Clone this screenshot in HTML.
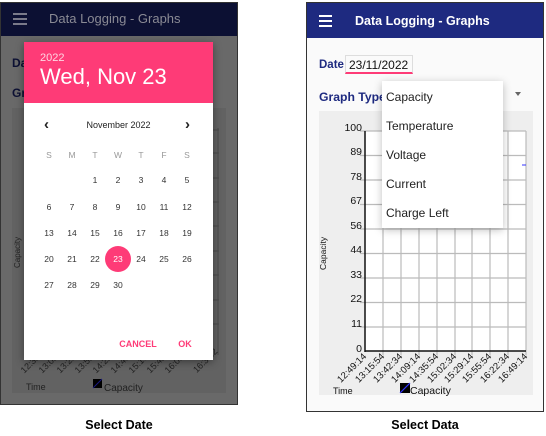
<!DOCTYPE html><html><head><style>
body{margin:0;width:546px;height:436px;background:#fff;position:relative;font-family:"Liberation Sans",sans-serif;overflow:hidden}
.a{position:absolute}
</style></head><body>
<!-- LEFT PHONE -->
<div class="a" style="left:0;top:2px;width:238px;height:403px;background:#696969;border:1px solid #333;box-sizing:border-box"></div>
<div class="a" style="left:1px;top:3px;width:236px;height:33px;background:#0c1033"></div>
<div class="a" style="left:13px;top:13px;width:14px;height:2px;background:#7a7a8a;box-shadow:0 5px 0 #7a7a8a,0 10px 0 #7a7a8a"></div>
<div class="a" style="left:49px;top:11px;font-size:13px;color:#8a8a94">Data Logging - Graphs</div>
<div class="a" style="left:12px;top:56px;font-size:12px;font-weight:bold;color:#0c1033">Da</div>
<div class="a" style="left:12px;top:86px;font-size:12px;font-weight:bold;color:#0c1033">Gr</div>
<div class="a" style="left:12px;top:108px;width:214px;height:285px;background:#626262"></div>
<svg class="a" style="left:0;top:0" width="240" height="410">
<g stroke="#4a4a4a" stroke-width="1">
<line x1="213" y1="130" x2="219" y2="130"/><line x1="213" y1="153" x2="219" y2="153"/><line x1="213" y1="178" x2="219" y2="178"/><line x1="213" y1="202" x2="219" y2="202"/><line x1="213" y1="226" x2="219" y2="226"/><line x1="213" y1="251" x2="219" y2="251"/><line x1="213" y1="275" x2="219" y2="275"/><line x1="213" y1="300" x2="219" y2="300"/><line x1="213" y1="324" x2="219" y2="324"/>
<line x1="218" y1="128" x2="218" y2="355"/></g>
<g font-size="9" fill="#222" font-family="Liberation Sans">
<text x="42" y="356" text-anchor="end" transform="rotate(-45 42 356)">12:35:</text>
<text x="60" y="356" text-anchor="end" transform="rotate(-45 60 356)">13:02:</text>
<text x="78" y="356" text-anchor="end" transform="rotate(-45 78 356)">13:29:</text>
<text x="96" y="356" text-anchor="end" transform="rotate(-45 96 356)">13:55:</text>
<text x="114" y="356" text-anchor="end" transform="rotate(-45 114 356)">14:22:</text>
<text x="132" y="356" text-anchor="end" transform="rotate(-45 132 356)">14:49:</text>
<text x="150" y="356" text-anchor="end" transform="rotate(-45 150 356)">15:16:</text>
<text x="168" y="356" text-anchor="end" transform="rotate(-45 168 356)">15:42:</text>
<text x="186" y="356" text-anchor="end" transform="rotate(-45 186 356)">16:09:</text>
<text x="218" y="352" text-anchor="end" transform="rotate(-45 218 352)">16:36:2</text>
<text x="26" y="390">Time</text>
<text x="104" y="391" font-size="10">Capacity</text>
<text x="20" y="268" transform="rotate(-90 20 268)" font-size="8">Capacity</text>
</g>
<rect x="93" y="379" width="9" height="9" fill="#000"/><line x1="93" y1="388" x2="102" y2="379" stroke="#1a1a80"/>
</svg>
<div class="a" style="left:24px;top:42px;width:189px;height:318px;background:#fff;box-shadow:0 2px 8px rgba(0,0,0,.4)"></div>
<div class="a" style="left:24px;top:42px;width:189px;height:61px;background:#fe3b77"></div>
<div class="a" style="left:40px;top:52px;font-size:11px;color:#ffd6e2">2022</div>
<div class="a" style="left:40px;top:64px;font-size:22px;color:#fff">Wed, Nov 23</div>
<div class="a" style="left:44px;top:116px;font-size:15px;color:#222;font-weight:bold">‹</div>
<div class="a" style="left:185px;top:116px;font-size:15px;color:#222;font-weight:bold">›</div>
<div class="a" style="left:24px;top:120px;width:189px;text-align:center;font-size:9px;color:#222">November 2022</div>
<svg class="a" style="left:0;top:0" width="240" height="360">
<circle cx="118" cy="259" r="13" fill="#fe3b77"/>
<g font-size="8.5" fill="#333" text-anchor="middle" font-family="Liberation Sans">
<g fill="#999"><text x="49" y="158">S</text><text x="72" y="158">M</text><text x="95" y="158">T</text><text x="118" y="158">W</text><text x="141" y="158">T</text><text x="164" y="158">F</text><text x="187" y="158">S</text></g>
<text x="95" y="183">1</text><text x="118" y="183">2</text><text x="141" y="183">3</text><text x="164" y="183">4</text><text x="187" y="183">5</text>
<text x="49" y="210">6</text><text x="72" y="210">7</text><text x="95" y="210">8</text><text x="118" y="210">9</text><text x="141" y="210">10</text><text x="164" y="210">11</text><text x="187" y="210">12</text>
<text x="49" y="236">13</text><text x="72" y="236">14</text><text x="95" y="236">15</text><text x="118" y="236">16</text><text x="141" y="236">17</text><text x="164" y="236">18</text><text x="187" y="236">19</text>
<text x="49" y="262">20</text><text x="72" y="262">21</text><text x="95" y="262">22</text><text x="118" y="262" fill="#fff">23</text><text x="141" y="262">24</text><text x="164" y="262">25</text><text x="187" y="262">26</text>
<text x="49" y="288">27</text><text x="72" y="288">28</text><text x="95" y="288">29</text><text x="118" y="288">30</text>
<g fill="#fe3b77" font-size="9" font-weight="bold"><text x="138" y="347">CANCEL</text><text x="185" y="347">OK</text></g>
</g></svg>
<div class="a" style="left:0;top:418px;width:238px;text-align:center;font-size:12.5px;font-weight:bold">Select Date</div>

<!-- RIGHT PHONE -->
<div class="a" style="left:306px;top:2px;width:238px;height:410px;background:#fafafa;border:1px solid #333;box-sizing:border-box"></div>
<div class="a" style="left:307px;top:3px;width:236px;height:35px;background:#1e2a80"></div>
<div class="a" style="left:319px;top:15px;width:13px;height:2px;background:#fff;box-shadow:0 5px 0 #fff,0 10px 0 #fff"></div>
<div class="a" style="left:355px;top:14px;font-size:12.5px;color:#fff;font-weight:bold">Data Logging - Graphs</div>
<div class="a" style="left:319px;top:59px;font-size:11.5px;font-weight:bold;color:#1e2a80">Date</div>
<div class="a" style="left:345px;top:55px;width:68px;height:19px;border:1px solid #ddd;border-bottom:2px solid #fe3b77;box-sizing:border-box;font-size:12px;color:#111;padding:2px 0 0 3px">23/11/2022</div>
<div class="a" style="left:319px;top:90px;font-size:12.2px;font-weight:bold;color:#1e2a80">Graph Type:</div>
<div class="a" style="left:515px;top:92px;width:0;height:0;border-left:3px solid transparent;border-right:3px solid transparent;border-top:4px solid #666"></div>
<div class="a" style="left:319px;top:111px;width:214px;height:284px;background:#eee"></div>
<svg class="a" style="left:0;top:0" width="546" height="410">
<rect x="365" y="131" width="161" height="220" fill="#fff"/>
<g stroke="#bbb" stroke-width="1.2">
<line x1="360" y1="131" x2="526" y2="131"/><line x1="360" y1="155.5" x2="526" y2="155.5"/><line x1="360" y1="180" x2="526" y2="180"/><line x1="360" y1="204.5" x2="526" y2="204.5"/><line x1="360" y1="229" x2="526" y2="229"/><line x1="360" y1="253.5" x2="526" y2="253.5"/><line x1="360" y1="278" x2="526" y2="278"/><line x1="360" y1="302.5" x2="526" y2="302.5"/><line x1="360" y1="327" x2="526" y2="327"/>
<line x1="383" y1="131" x2="383" y2="355"/><line x1="401" y1="131" x2="401" y2="355"/><line x1="419" y1="131" x2="419" y2="355"/><line x1="437" y1="131" x2="437" y2="355"/><line x1="455" y1="131" x2="455" y2="355"/><line x1="472" y1="131" x2="472" y2="355"/><line x1="490" y1="131" x2="490" y2="355"/><line x1="508" y1="131" x2="508" y2="355"/><line x1="526" y1="131" x2="526" y2="355"/>
</g>
<g stroke="#111" stroke-width="1.5"><line x1="365" y1="131" x2="365" y2="352"/><line x1="365" y1="351" x2="526" y2="351"/></g>
<line x1="522" y1="165" x2="526" y2="165" stroke="#33f" stroke-width="1"/>
<g font-size="10.5" fill="#111" text-anchor="end" font-family="Liberation Sans">
<text x="362" y="131">100</text><text x="362" y="155">89</text><text x="362" y="180">78</text><text x="362" y="204">67</text><text x="362" y="229">56</text><text x="362" y="253">44</text><text x="362" y="278">33</text><text x="362" y="302">22</text><text x="362" y="327">11</text><text x="362" y="352">0</text>
</g>
<g font-size="9.5" fill="#111" text-anchor="end" font-family="Liberation Sans">
<text x="367" y="357" transform="rotate(-45 367 357)">12:49:14</text>
<text x="385" y="357" transform="rotate(-45 385 357)">13:15:54</text>
<text x="403" y="357" transform="rotate(-45 403 357)">13:42:34</text>
<text x="421" y="357" transform="rotate(-45 421 357)">14:09:14</text>
<text x="439" y="357" transform="rotate(-45 439 357)">14:35:54</text>
<text x="457" y="357" transform="rotate(-45 457 357)">15:02:34</text>
<text x="474" y="357" transform="rotate(-45 474 357)">15:29:14</text>
<text x="492" y="357" transform="rotate(-45 492 357)">15:55:54</text>
<text x="510" y="357" transform="rotate(-45 510 357)">16:22:34</text>
<text x="528" y="357" transform="rotate(-45 528 357)">16:49:14</text>
</g>
<g font-size="9" fill="#111" font-family="Liberation Sans">
<text x="333" y="394">Time</text><text x="410" y="394" font-size="10.5">Capacity</text>
<text x="326" y="270" transform="rotate(-90 326 270)" font-size="8.5">Capacity</text>
</g>
<rect x="400" y="383" width="10" height="10" fill="#000"/><line x1="400" y1="393" x2="410" y2="383" stroke="#33f" stroke-width="1.2"/>
</svg>
<div class="a" style="left:382px;top:81px;width:121px;height:147px;background:#fff;box-shadow:0 2px 8px rgba(0,0,0,.25);font-size:12px;color:#222">
<div class="a" style="left:4px;top:9px">Capacity</div>
<div class="a" style="left:4px;top:38px">Temperature</div>
<div class="a" style="left:4px;top:67px">Voltage</div>
<div class="a" style="left:4px;top:96px">Current</div>
<div class="a" style="left:4px;top:125px">Charge Left</div>
</div>
<div class="a" style="left:306px;top:418px;width:238px;text-align:center;font-size:12.5px;font-weight:bold">Select Data</div>
</body></html>
